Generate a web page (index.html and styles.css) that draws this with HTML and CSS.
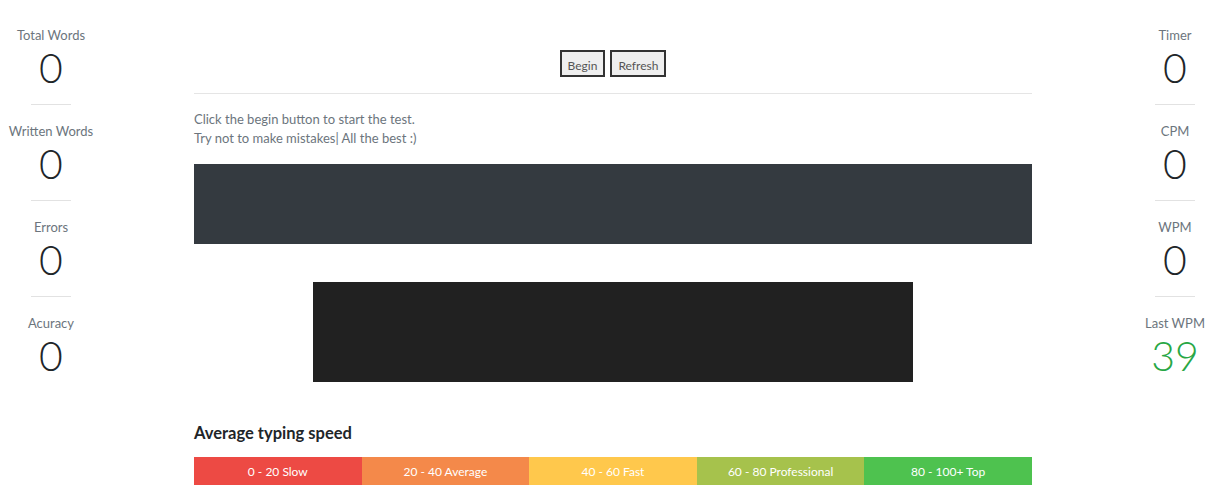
FILE: index.html
```html
<!DOCTYPE html>
<html lang="en">
<head>
<meta charset="utf-8">
<title>Typing Test</title>
<link rel="stylesheet" href="styles.css">
</head>
<body>
<div class="page">
  <aside class="side">
    <div class="stat"><div class="label">Total Words</div><div class="num">0</div></div>
    <hr class="sep">
    <div class="stat"><div class="label">Written Words</div><div class="num">0</div></div>
    <hr class="sep">
    <div class="stat"><div class="label">Errors</div><div class="num">0</div></div>
    <hr class="sep">
    <div class="stat"><div class="label">Acuracy</div><div class="num">0</div></div>
  </aside>
  <main class="main">
    <div class="inner">
      <div class="buttons">
        <button class="btn">Begin</button>
        <button class="btn">Refresh</button>
      </div>
      <hr class="rule">
      <p class="intro">Click the begin button to start the test.<br>Try not to make mistakes| All the best :)</p>
      <div class="text-box"></div>
      <div class="input-box"></div>
      <h2 class="speed-title">Average typing speed</h2>
      <div class="speed-bar">
        <div class="seg seg-red">0 - 20 Slow</div>
        <div class="seg seg-orange">20 - 40 Average</div>
        <div class="seg seg-yellow">40 - 60 Fast</div>
        <div class="seg seg-lime">60 - 80 Professional</div>
        <div class="seg seg-green">80 - 100+ Top</div>
      </div>
    </div>
  </main>
  <aside class="side">
    <div class="stat"><div class="label">Timer</div><div class="num">0</div></div>
    <hr class="sep">
    <div class="stat"><div class="label">CPM</div><div class="num">0</div></div>
    <hr class="sep">
    <div class="stat"><div class="label">WPM</div><div class="num">0</div></div>
    <hr class="sep">
    <div class="stat"><div class="label">Last WPM</div><div class="num num-green">39</div></div>
  </aside>
</div>
</body>
</html>
```
FILE: styles.css
```css
html, body {
  margin: 0;
  padding: 0;
  background: #fff;
}
body {
  font-family: Lato, "Open Sans", sans-serif;
  color: #212529;
}
.page {
  display: grid;
  grid-template-columns: 102px 1022px 102px;
  width: 1228px;
  height: 499px;
  overflow: hidden;
}
.side {
  display: flex;
  flex-direction: column;
  align-items: center;
  padding-top: 26px;
}
.stat {
  display: flex;
  flex-direction: column;
  align-items: center;
}
.label {
  font-size: 13px;
  line-height: 18px;
  color: #6c757d;
  white-space: nowrap;
}
.num {
  font-size: 41px;
  font-weight: 300;
  line-height: 48px;
  color: #212529;
}
.num-green {
  color: #28a745;
}
.sep {
  width: 40px;
  border: 0;
  border-top: 1px solid #e2e2e2;
  margin: 12px 0 17px;
}
.main {
  display: flex;
  justify-content: center;
}
.inner {
  width: 838px;
  padding-top: 50px;
}
.buttons {
  display: flex;
  justify-content: center;
  gap: 5px;
}
.btn {
  font-family: inherit;
  font-size: 12px;
  height: 27px;
  padding: 4px 6px 0;
  background: #efefef;
  color: #555;
  border: 2px solid #333;
  border-radius: 0;
}
.rule {
  border: 0;
  border-top: 1px solid #e5e5e5;
  margin: 16px 0 0;
}
.intro {
  margin: 16px 0 0;
  font-size: 13px;
  line-height: 19px;
  color: #6c757d;
}
.text-box {
  margin-top: 16px;
  height: 80px;
  background: #343a40;
}
.input-box {
  margin: 38px auto 0;
  width: 600px;
  height: 100px;
  background: #212121;
}
.speed-title {
  margin: 41px 0 0;
  font-size: 16.5px;
  line-height: 20px;
  font-weight: 700;
  color: #212529;
}
.speed-bar {
  margin-top: 14px;
  display: flex;
  height: 28px;
}
.seg {
  flex: 1;
  display: flex;
  align-items: center;
  justify-content: center;
  color: #fff;
  font-size: 12px;
}
.seg-red { background: #ed4a44; }
.seg-orange { background: #f4894a; }
.seg-yellow { background: #ffc84c; }
.seg-lime { background: #a6c24c; }
.seg-green { background: #4ec24f; }
```
